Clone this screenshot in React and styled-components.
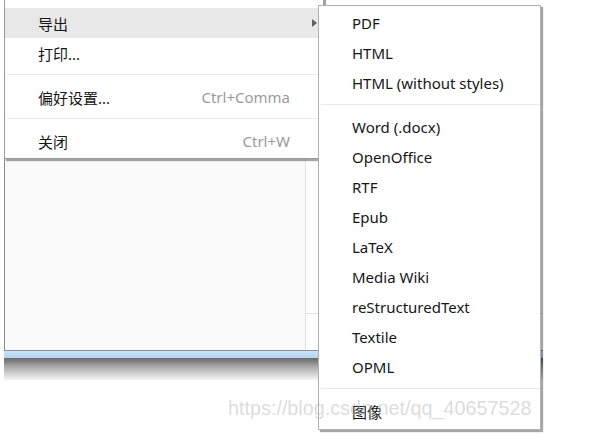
import React from "react";
import styled, { createGlobalStyle } from "styled-components";

const Global = createGlobalStyle`
  html, body { margin: 0; padding: 0; background: #ffffff; }
  body { font-family: "Noto Sans", "Noto Sans CJK SC", sans-serif; }
`;

const Stage = styled.div`
  position: relative;
  width: 595px;
  height: 441px;
  overflow: hidden;
  background: #ffffff;
`;

const Window = styled.div`
  margin-left: 4px;
  width: 539px;
  height: 351px;
  box-sizing: border-box;
  border-left: 1px solid #8a8a8a;
  border-bottom: 1px solid #8f8f8f;
  background: #fafafa;
  display: flex;
`;

const MainArea = styled.div`
  flex: 0 0 300px;
`;

const SideArea = styled.div`
  flex: 1;
  display: flex;
  flex-direction: column;
  border-left: 1px solid #e2e2e2;
  background: #ffffff;
`;

const SideTop = styled.div`
  height: 313px;
  border-bottom: 1px solid #e2e2e2;
`;

const BlueStrip = styled.div`
  margin-left: 4px;
  width: 539px;
  height: 7px;
  background: linear-gradient(#c9e3fb, #b3d4f4);
`;

const WindowShadow = styled.div`
  margin-left: 4px;
  width: 539px;
  height: 22px;
  background: linear-gradient(#4e4e4e, #9a9a9a 40%, #f4f4f4 100%);
  opacity: 0.85;
`;

const Menu = styled.div`
  position: absolute;
  left: ${(p) => p.$left}px;
  top: ${(p) => p.$top}px;
  width: ${(p) => p.$width}px;
  box-sizing: border-box;
  padding: ${(p) => p.$padTop}px 0 ${(p) => p.$padBottom}px;
  background: #ffffff;
  border: 1px solid ${(p) => p.$border};
  box-shadow: 2px 2px 1px rgba(0, 0, 0, 0.35);
  display: flex;
  flex-direction: column;
`;

const Item = styled.div`
  height: 30px;
  display: flex;
  align-items: center;
  padding: 0 ${(p) => p.$padRight}px 0 ${(p) => p.$padLeft}px;
  background: ${(p) => (p.$active ? "#e8e8e8" : "transparent")};
  font-size: 15px;
  color: #161616;
  font-family: "Noto Sans", "Noto Sans CJK SC", sans-serif;
`;

const Label = styled.span`
  flex: 1;
  white-space: nowrap;
`;

const Shortcut = styled.span`
  color: #9a9a9a;
  white-space: nowrap;
`;

const Arrow = styled.span`
  width: 0;
  height: 0;
  border-top: 4px solid transparent;
  border-bottom: 4px solid transparent;
  border-left: 5px solid #606060;
`;

const Separator = styled.div`
  height: 1px;
  margin: 6px 0 7px ${(p) => p.$indent}px;
  background: #e9e9e9;
`;

const Watermark = styled.div`
  position: absolute;
  left: 228px;
  top: 397px;
  font-family: "Liberation Sans", Arial, sans-serif;
  font-size: 19.8px;
  color: rgba(175, 175, 175, 0.45);
  white-space: nowrap;
  pointer-events: none;
`;

const exportItems1 = ["PDF", "HTML", "HTML (without styles)"];
const exportItems2 = [
  "Word (.docx)",
  "OpenOffice",
  "RTF",
  "Epub",
  "LaTeX",
  "Media Wiki",
  "reStructuredText",
  "Textile",
  "OPML",
];

export default function App() {
  return (
    <>
      <Global />
      <Stage>
        <Window>
          <MainArea />
          <SideArea>
            <SideTop />
          </SideArea>
        </Window>
        <BlueStrip />
        <WindowShadow />

        <Menu $left={4} $top={-2} $width={320} $padTop={9} $padBottom={2} $border="#9a9a9a">
          <Item $active $padLeft={33} $padRight={6}>
            <Label>导出</Label>
            <Arrow />
          </Item>
          <Item $padLeft={33} $padRight={33}>
            <Label>打印...</Label>
          </Item>
          <Separator $indent={2} />
          <Item $padLeft={33} $padRight={33}>
            <Label>偏好设置...</Label>
            <Shortcut>Ctrl+Comma</Shortcut>
          </Item>
          <Separator $indent={2} />
          <Item $padLeft={33} $padRight={33}>
            <Label>关闭</Label>
            <Shortcut>Ctrl+W</Shortcut>
          </Item>
        </Menu>

        <Menu $left={318} $top={5} $width={223} $padTop={2} $padBottom={3} $border="#b0b0b0">
          {exportItems1.map((t) => (
            <Item key={t} $padLeft={33} $padRight={8}>
              <Label>{t}</Label>
            </Item>
          ))}
          <Separator $indent={2} />
          {exportItems2.map((t) => (
            <Item key={t} $padLeft={33} $padRight={8}>
              <Label>{t}</Label>
            </Item>
          ))}
          <Separator $indent={2} />
          <Item $padLeft={33} $padRight={8}>
            <Label>图像</Label>
          </Item>
        </Menu>

        <Watermark>https://blog.csdn.net/qq_40657528</Watermark>
      </Stage>
    </>
  );
}
